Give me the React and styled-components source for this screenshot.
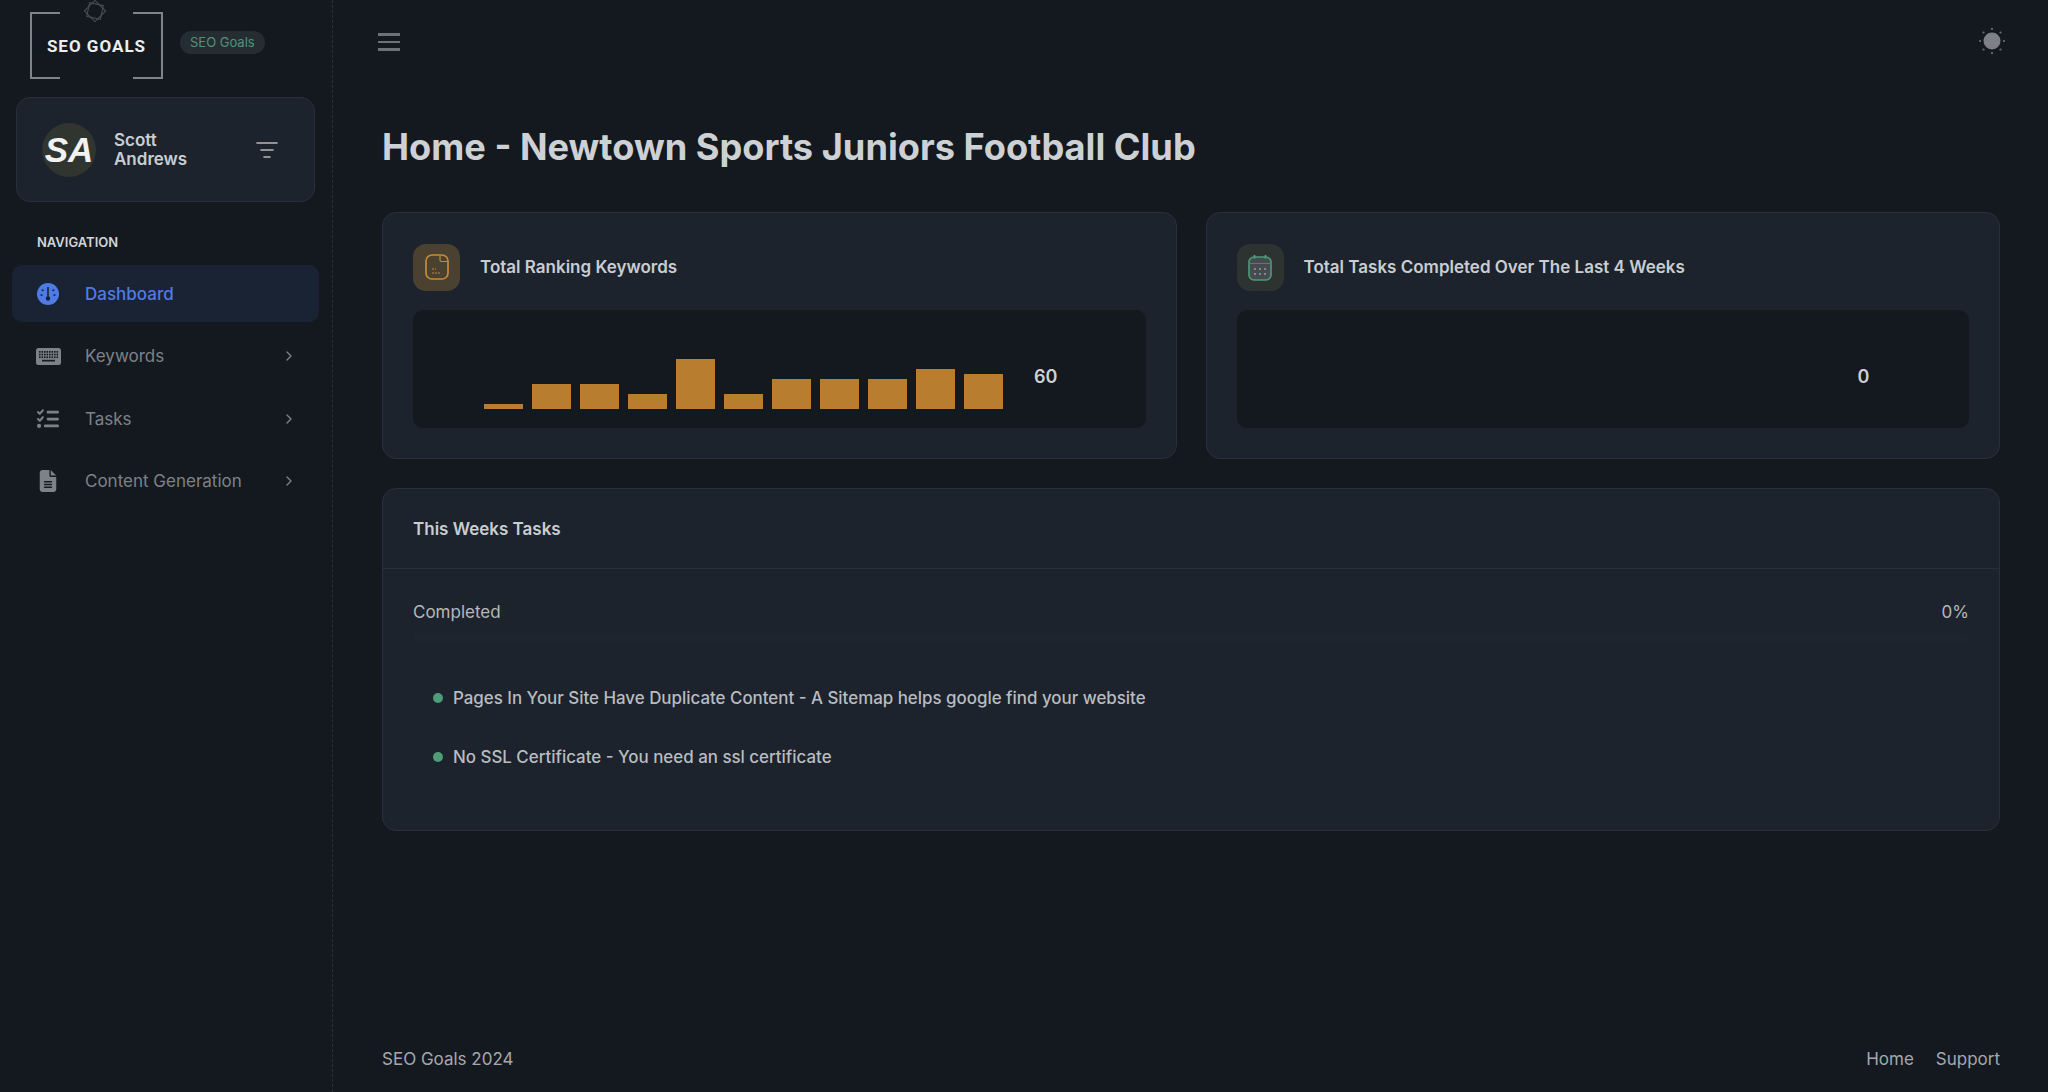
import React from 'react'
import styled, { createGlobalStyle } from 'styled-components'
import { ChevronRight, ListFilter } from 'lucide-react'
import { FaListCheck, FaFileLines } from 'react-icons/fa6'

const bars = [5, 25, 25, 15, 50, 15, 30, 30, 30, 40, 35]

const GlobalStyle = createGlobalStyle`
  html, body { margin: 0; padding: 0; background: #141920; }
  body { font-family: Inter, "Noto Sans", sans-serif; color: #c9cdd2; }
  * { box-sizing: border-box; }
`

const Layout = styled.div`
  display: flex;
  width: 2048px;
  height: 1092px;
  overflow: hidden;
  background: #141920;
`

const Sidebar = styled.aside`
  width: 333px;
  flex: none;
  padding: 0 12px;
  border-right: 1px dashed #2a3039;
  display: flex;
  flex-direction: column;
`

const LogoRow = styled.div`
  height: 97px;
  display: flex;
  align-items: flex-start;
  padding-left: 18px;
  gap: 17px;
`

const LogoBox = styled.div`
  position: relative;
  width: 133px;
  height: 67px;
  margin-top: 12px;
  display: flex;
  align-items: center;
  justify-content: center;
  font: 700 17px Roboto, sans-serif;
  letter-spacing: 1px;
  color: #eceded;
  border-left: 2px solid #80848a;
  border-right: 2px solid #80848a;
  &::before, &::after {
    content: '';
    position: absolute;
    left: 0;
    right: 0;
    height: 2px;
    background: linear-gradient(to right, #80848a 28px, transparent 28px, transparent 101px, #80848a 101px);
  }
  &::before { top: 0; }
  &::after { bottom: 0; }
`

const LogoMark = styled.svg`
  position: absolute;
  top: -13px;
  left: 51px;
`

const Badge = styled.span`
  margin-top: 31px;
  padding: 0 10px;
  height: 23px;
  line-height: 23px;
  border-radius: 12px;
  background: #252d33;
  color: #52927a;
  font-size: 13px;
`

const UserCard = styled.div`
  height: 105px;
  margin-left: 4px;
  width: 299px;
  background: #1c232c;
  border: 1px solid #2a3039;
  border-radius: 14px;
  display: flex;
  align-items: center;
  padding: 0 25px;
`

const Avatar = styled.div`
  width: 54px;
  height: 54px;
  border-radius: 50%;
  background: #30352f;
  color: #f2f2f2;
  display: flex;
  align-items: center;
  justify-content: center;
  font: italic 700 35px "Liberation Sans", sans-serif;
`

const UserName = styled.div`
  flex: 1;
  margin-left: 18px;
  font-size: 17px;
  font-weight: 600;
  line-height: 19px;
  color: #c9cdd2;
`

const FilterIcon = styled(ListFilter)`
  color: #b5b8bc;
  margin-right: 10px;
`

const NavTitle = styled.div`
  margin: 32px 0 15px 25px;
  font-size: 13px;
  font-weight: 600;
  color: #d2d4d6;
  line-height: 16px;
`

const NavList = styled.nav`
  display: flex;
  flex-direction: column;
  gap: 5.5px;
`

const NavItem = styled.div`
  height: 57px;
  width: 307px;
  display: flex;
  align-items: center;
  padding: 0 22px 0 23px;
  border-radius: 10px;
  background: ${(props) => (props.$active ? '#1a2333' : 'transparent')};
  color: ${(props) => (props.$active ? '#4f7be6' : '#7e8287')};
  font-size: 17px;
  font-weight: ${(props) => (props.$active ? 500 : 400)};
`

const NavIcon = styled.span`
  width: 26px;
  display: flex;
  justify-content: center;
  margin-right: 24px;
  font-size: 22px;
`

const NavLabel = styled.span`
  flex: 1;
`

const Main = styled.main`
  flex: 1;
  padding: 0 48px 0 49px;
  display: flex;
  flex-direction: column;
  min-width: 0;
`

const TopBar = styled.div`
  height: 82px;
  display: flex;
  align-items: center;
  justify-content: space-between;
  margin-right: -5px;
`

const Burger = styled.div`
  width: 22px;
  margin: 2px 0 0 -4px;
  display: flex;
  flex-direction: column;
  gap: 5px;
  span {
    height: 2.5px;
    background: #6e7277;
  }
`

const Title = styled.h1`
  margin: 44px 0 43px;
  font-size: 36.2px;
  line-height: 43px;
  font-weight: 700;
  color: #ced1d4;
`

const CardRow = styled.div`
  display: grid;
  grid-template-columns: 1fr 1fr;
  column-gap: 29px;
  margin-bottom: 29px;
`

const Card = styled.section`
  background: #1c232c;
  border: 1px solid #2a3039;
  border-radius: 14px;
`

const StatCard = styled(Card)`
  height: 247px;
  padding: 30px;
`

const StatHead = styled.div`
  display: flex;
  align-items: center;
  gap: 20px;
  height: 48px;
  margin-bottom: 19px;
`

const StatIcon = styled.div`
  width: 47px;
  height: 47px;
  border-radius: 13px;
  background: ${(props) => props.$bg};
  color: ${(props) => props.$fg};
  display: flex;
  align-items: center;
  justify-content: center;
`

const StatTitle = styled.h3`
  margin: 0;
  font-size: 17px;
  font-weight: 600;
  color: #c9cdd2;
`

const ChartBox = styled.div`
  height: 118px;
  border-radius: 10px;
  background: #14191f;
  display: flex;
  align-items: flex-end;
  padding: 0 0 19px 71px;
  position: relative;
`

const Bars = styled.div`
  width: 519px;
  display: flex;
  align-items: flex-end;
  gap: 9px;
`

const Bar = styled.div`
  width: 39px;
  background: #b97d30;
`

const ChartValue = styled.span`
  position: absolute;
  left: 621px;
  top: 66px;
  transform: translateY(-50%);
  font-size: 18px;
  font-weight: 600;
  color: #ced1d4;
`

const TaskCard = styled(Card)`
  height: 343px;
`

const TaskHead = styled.div`
  height: 80px;
  padding: 0 30px;
  display: flex;
  align-items: center;
  border-bottom: 1px solid #2a3039;
  font-size: 17px;
  font-weight: 600;
  color: #c9cdd2;
`

const Progress = styled.div`
  padding: 33px 30px 0;
  display: flex;
  justify-content: space-between;
  font-size: 17px;
  line-height: 20px;
  color: #b5b8bc;
`

const ProgressTrack = styled.div`
  height: 10px;
  margin: 11px 30px 0;
  border-radius: 5px;
  background: #1e252e;
`

const TaskList = styled.ul`
  list-style: none;
  margin: 45px 0 0;
  padding: 0 0 0 50px;
  display: flex;
  flex-direction: column;
  gap: 39px;
`

const TaskItem = styled.li`
  display: flex;
  align-items: center;
  gap: 10px;
  height: 20px;
  font-size: 16.9px;
  font-weight: 500;
  color: #b9bcc0;
  &::before {
    content: '';
    width: 10px;
    height: 10px;
    border-radius: 50%;
    background: #4f9c78;
  }
`

const Footer = styled.footer`
  margin-top: auto;
  height: 43px;
  display: flex;
  justify-content: space-between;
  font-size: 17px;
  line-height: 20px;
  color: #a4a8ac;
`

const FootLinks = styled.div`
  display: flex;
  gap: 22px;
`

function Sun() {
  const dots = [0, 45, 90, 135, 180, 225, 270, 315]
  return (
    <svg width="26" height="26" viewBox="0 0 26 26">
      <circle cx="13" cy="13" r="8.5" fill="#7d8084" />
      {dots.map((a) => (
        <circle
          key={a}
          cx={13 + 12 * Math.cos((a * Math.PI) / 180)}
          cy={13 + 12 * Math.sin((a * Math.PI) / 180)}
          r="1.1"
          fill="#6c7074"
        />
      ))}
    </svg>
  )
}

function GaugeIcon() {
  return (
    <svg width="22" height="22" viewBox="0 0 22 22">
      <circle cx="11" cy="11" r="11" fill="currentColor" />
      <circle cx="11" cy="15.5" r="2.2" fill="#1a2333" />
      <path d="M11 4v11" stroke="#1a2333" strokeWidth="1.6" />
      <path d="M5 6.5l1.5 1.5M17 6.5l-1.5 1.5M3.5 12h2M16.5 12h2" stroke="#1a2333" strokeWidth="1.6" />
    </svg>
  )
}

function KeyboardIcon() {
  const keys = []
  for (let r = 0; r < 3; r++) {
    for (let c = 0; c < 8; c++) {
      keys.push(<rect key={`${r}-${c}`} x={3 + c * 2.5} y={3 + r * 2.7} width="1.6" height="1.7" />)
    }
  }
  return (
    <svg width="25" height="17" viewBox="0 0 25 17">
      <rect width="25" height="17" rx="2.5" fill="currentColor" />
      <g fill="#161b21">
        {keys}
        <rect x="6" y="11.8" width="13" height="1.7" />
      </g>
    </svg>
  )
}

function NoteIcon() {
  return (
    <svg width="24" height="26" viewBox="0 0 24 26" fill="none" stroke="currentColor">
      <rect x="1" y="1" width="22" height="24" rx="6" strokeWidth="1.7" />
      <path d="M15 1.5v4.5a1.5 1.5 0 0 0 1.5 1.5h6" strokeWidth="1.2" />
      <path d="M7 15h4M7 19h9" strokeWidth="1.1" strokeDasharray="2 1" />
    </svg>
  )
}

function CalendarIcon() {
  const dots = [7, 12, 17].flatMap((x) => [15, 20].map((y) => [x, y]))
  return (
    <svg width="24" height="27" viewBox="0 0 24 27" fill="none">
      <rect x="1" y="3" width="22" height="23" rx="5" fill="#464b4f" stroke="#4f9c78" strokeWidth="1.6" />
      <path d="M6.5 1v3.5M17.5 1v3.5" stroke="#4f9c78" strokeWidth="1.8" />
      <path d="M2 9.5h20" stroke="#6b7074" strokeWidth="1" />
      {dots.map(([x, y]) => (
        <rect key={`${x}-${y}`} x={x - 1} y={y - 1} width="2" height="2" fill="#82868a" />
      ))}
    </svg>
  )
}

export default function App() {
  return (
    <Layout>
      <GlobalStyle />
      <Sidebar>
        <LogoRow>
          <LogoBox>
            <LogoMark width="24" height="24" viewBox="0 0 24 24" fill="none" stroke="#4c5056" strokeWidth="1">
              <rect x="4.5" y="4.5" width="15" height="15" transform="rotate(45 12 12)" />
              <rect x="5" y="5" width="14" height="14" transform="rotate(12 12 12)" />
            </LogoMark>
            SEO GOALS
          </LogoBox>
          <Badge>SEO Goals</Badge>
        </LogoRow>
        <UserCard>
          <Avatar>SA</Avatar>
          <UserName>Scott<br />Andrews</UserName>
          <FilterIcon size={24} strokeWidth={1.6} />
        </UserCard>
        <NavTitle>NAVIGATION</NavTitle>
        <NavList>
          <NavItem $active>
            <NavIcon><GaugeIcon /></NavIcon>
            <NavLabel>Dashboard</NavLabel>
          </NavItem>
          <NavItem>
            <NavIcon><KeyboardIcon /></NavIcon>
            <NavLabel>Keywords</NavLabel>
            <ChevronRight size={16} />
          </NavItem>
          <NavItem>
            <NavIcon><FaListCheck /></NavIcon>
            <NavLabel>Tasks</NavLabel>
            <ChevronRight size={16} />
          </NavItem>
          <NavItem>
            <NavIcon><FaFileLines /></NavIcon>
            <NavLabel>Content Generation</NavLabel>
            <ChevronRight size={16} />
          </NavItem>
        </NavList>
      </Sidebar>
      <Main>
        <TopBar>
          <Burger><span /><span /><span /></Burger>
          <Sun />
        </TopBar>
        <Title>Home - Newtown Sports Juniors Football Club</Title>
        <CardRow>
          <StatCard>
            <StatHead>
              <StatIcon $bg="#4a4130" $fg="#c98a35"><NoteIcon /></StatIcon>
              <StatTitle>Total Ranking Keywords</StatTitle>
            </StatHead>
            <ChartBox>
              <Bars>
                {bars.map((h, i) => (
                  <Bar key={i} style={{ height: h }} />
                ))}
              </Bars>
              <ChartValue>60</ChartValue>
            </ChartBox>
          </StatCard>
          <StatCard>
            <StatHead>
              <StatIcon $bg="#2c3331" $fg="#4f9c78"><CalendarIcon /></StatIcon>
              <StatTitle>Total Tasks Completed Over The Last 4 Weeks</StatTitle>
            </StatHead>
            <ChartBox>
              <ChartValue>0</ChartValue>
            </ChartBox>
          </StatCard>
        </CardRow>
        <TaskCard>
          <TaskHead>This Weeks Tasks</TaskHead>
          <Progress>
            <span>Completed</span>
            <span>0%</span>
          </Progress>
          <ProgressTrack />
          <TaskList>
            <TaskItem>Pages In Your Site Have Duplicate Content - A Sitemap helps google find your website</TaskItem>
            <TaskItem>No SSL Certificate - You need an ssl certificate</TaskItem>
          </TaskList>
        </TaskCard>
        <Footer>
          <span>SEO Goals 2024</span>
          <FootLinks>
            <span>Home</span>
            <span>Support</span>
          </FootLinks>
        </Footer>
      </Main>
    </Layout>
  )
}
